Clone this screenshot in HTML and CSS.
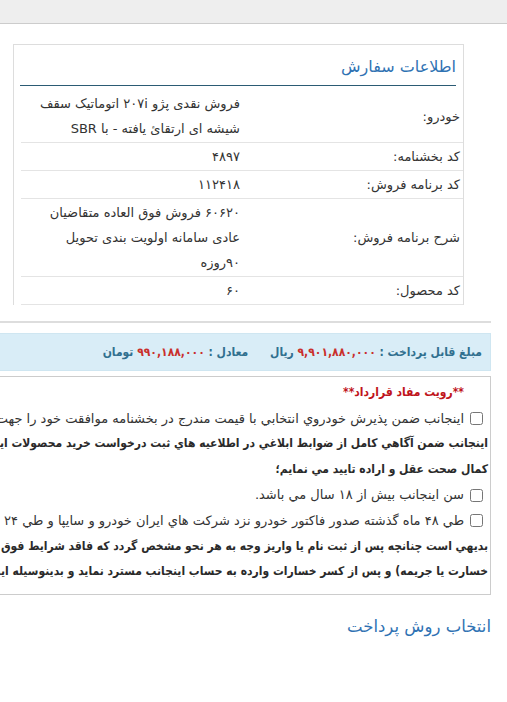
FILE: index.html
```html
<!DOCTYPE html>
<html lang="fa" dir="rtl">
<head>
<meta charset="utf-8">
<title>اطلاعات سفارش</title>
<link rel="stylesheet" href="styles.css">
</head>
<body>
<div class="topbar"></div>
<div class="page">
  <div class="card">
    <h3 class="card-title">اطلاعات سفارش</h3>
    <table class="info">
      <tr>
        <td class="label">خودرو:</td>
        <td class="value">فروش نقدی پژو ۲۰۷i اتوماتیک سقف<br>شیشه ای ارتقائ یافته - با SBR</td>
      </tr>
      <tr>
        <td class="label">کد بخشنامه:</td>
        <td class="value">۴۸۹۷</td>
      </tr>
      <tr>
        <td class="label">کد برنامه فروش:</td>
        <td class="value">۱۱۲۴۱۸</td>
      </tr>
      <tr>
        <td class="label">شرح برنامه فروش:</td>
        <td class="value">۶۰۶۲۰ فروش فوق العاده متقاضیان<br>عادی سامانه اولویت بندی تحویل<br>۹۰روزه</td>
      </tr>
      <tr>
        <td class="label">کد محصول:</td>
        <td class="value">۶۰</td>
      </tr>
    </table>
  </div>

  <div class="lower">
    <div class="sep"></div>
    <div class="pay">
      مبلغ قابل پرداخت : <span class="amount">۹,۹۰۱,۸۸۰,۰۰۰</span> ریال
      <span class="equiv">معادل : <span class="amount">۹۹۰,۱۸۸,۰۰۰</span> تومان</span>
    </div>

    <div class="contract">
      <div class="line title">**رویت مفاد قرارداد**</div>
      <div class="line"><label><input type="checkbox" class="check">اینجانب ضمن پذیرش خودروي انتخابي با قیمت مندرج در بخشنامه موافقت خود را جهت انجام مراحل ثبت نام و خرید خودرو اعلام مي نمایم و</label></div>
      <div class="line strong">اینجانب ضمن آگاهي کامل از ضوابط ابلاغي در اطلاعیه هاي ثبت درخواست خرید محصولات ایران خودرو، کلیه شرایط و مفاد قرارداد را در</div>
      <div class="line strong">کمال صحت عقل و اراده تایید مي نمایم؛</div>
      <div class="line"><label><input type="checkbox" class="check">سن اینجانب بیش از ۱۸ سال مي باشد.</label></div>
      <div class="line"><label><input type="checkbox" class="check">طي ۴۸ ماه گذشته صدور فاکتور خودرو نزد شرکت هاي ایران خودرو و سایپا و طي ۲۴ ماه گذشته ثبت نام قطعي نداشته ام.</label></div>
      <div class="line strong">بديهي است چنانچه پس از ثبت نام يا واريز وجه به هر نحو مشخص گردد که فاقد شرايط فوق بوده ام، شرکت مجاز است وجه واریزی را (پس از کسر</div>
      <div class="line strong">خسارت یا جریمه) و پس از کسر خسارات وارده به حساب اینجانب مسترد نماید و بدینوسیله اینجانب حق هرگونه اعتراضی را از خود سلب مي نمایم.</div>
    </div>

    <h3 class="pay-title">انتخاب روش پرداخت</h3>
  </div>
</div>
</body>
</html>
```

FILE: styles.css
```css
* {
  box-sizing: border-box;
}

html, body {
  margin: 0;
  padding: 0;
  background: #ffffff;
}

body {
  direction: rtl;
  font-family: "DejaVu Sans", "Noto Sans", sans-serif;
  font-size: 13px;
  color: #333333;
  overflow: hidden;
}

.topbar {
  height: 24px;
  background: #eeeeee;
  border-bottom: 1px solid #cccccc;
}

.page {
  overflow: hidden;
  padding-top: 20px;
}

.card {
  width: 451px;
  margin-right: 43px;
  border: 1px solid #dddddd;
  border-bottom: none;
}

.card-title {
  margin: 0 7px 0 6px;
  padding: 11px 0 7px;
  font-size: 16px;
  font-weight: normal;
  line-height: 22px;
  color: #2f72b3;
  border-bottom: 1px solid #2b5b74;
}

.info {
  width: 442px;
  margin: 4px 0 0 0;
  border-collapse: collapse;
}

.info td {
  padding: 1px 4px;
  line-height: 25px;
  border-bottom: 1px solid #e4e4e4;
  vertical-align: middle;
  text-align: right;
}

.info .label {
  width: 219px;
  padding-right: 3px;
}

.info .value {
  white-space: nowrap;
}

.lower {
  width: 900px;
  margin-right: 16px;
}

.sep {
  margin-top: 16px;
  height: 0;
  border-top: 2px solid #dddddd;
}

.pay {
  margin-top: 10px;
  padding: 8px 8px;
  line-height: 20px;
  background: #d9edf7;
  border: 1px solid #cfe6f1;
  color: #31708f;
  font-family: "DejaVu Sans Condensed", "DejaVu Sans", sans-serif;
  font-size: 12px;
  font-weight: bold;
}

.amount {
  color: #c9302c;
}

.equiv {
  margin-right: 18px;
}

.contract {
  margin-top: 5px;
  padding: 3px 2px 9px;
  border: 1px solid #cccccc;
}

.line {
  white-space: nowrap;
  line-height: 25.6px;
}

.line label {
  display: flex;
  align-items: center;
}

.title {
  padding-right: 24px;
  color: #c0141b;
  font-family: "DejaVu Sans Condensed", "DejaVu Sans", sans-serif;
  font-size: 12px;
  font-weight: bold;
}

.strong {
  font-family: "DejaVu Sans Condensed", "DejaVu Sans", sans-serif;
  font-size: 12px;
  font-weight: bold;
  color: #2a2a2a;
}

.check {
  width: 13px;
  height: 13px;
  margin: 0 5px 0 6px;
  flex: none;
}

.pay-title {
  margin: 20px 0 0;
  font-size: 16.5px;
  font-weight: normal;
  line-height: 24px;
  color: #2f72b3;
}
```
